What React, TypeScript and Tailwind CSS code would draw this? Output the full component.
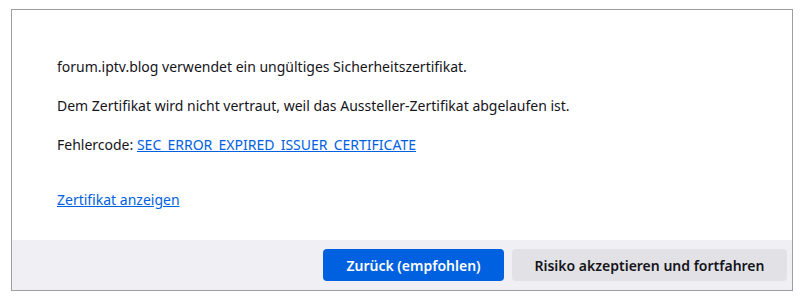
export default function App() {
  return (
    <div className="w-[804px] h-[299px] bg-white pl-[11px] pt-[9px]" style={{ fontFamily: '"Noto Sans", "Open Sans", sans-serif' }}>
      <div className="w-[782px] h-[282px] border border-[#9e9e9e] flex flex-col">
        <div className="flex-1 pl-[45px] pt-[46px] text-[14px] leading-[22px] text-[#15141a]">
          <p>forum.iptv.blog verwendet ein ungültiges Sicherheitszertifikat.</p>
          <p className="mt-[17px]">Dem Zertifikat wird nicht vertraut, weil das Aussteller-Zertifikat abgelaufen ist.</p>
          <p className="mt-[17px]">
            Fehlercode:{" "}
            <a href="#" className="text-[#0061e0] underline">
              SEC_ERROR_EXPIRED_ISSUER_CERTIFICATE
            </a>
          </p>
          <p className="mt-[33px]">
            <a href="#" className="text-[#0061e0] underline">
              Zertifikat anzeigen
            </a>
          </p>
        </div>
        <div className="h-[50px] bg-[#f0f0f4] flex items-center justify-end gap-2 pr-[5px]">
          <button className="h-8 w-[181px] rounded bg-[#0061e0] text-white text-[14px] font-semibold">
            Zurück (empfohlen)
          </button>
          <button className="h-8 w-[275px] rounded bg-[#e2e2e6] text-[#15141a] text-[14px] font-semibold">
            Risiko akzeptieren und fortfahren
          </button>
        </div>
      </div>
    </div>
  );
}
